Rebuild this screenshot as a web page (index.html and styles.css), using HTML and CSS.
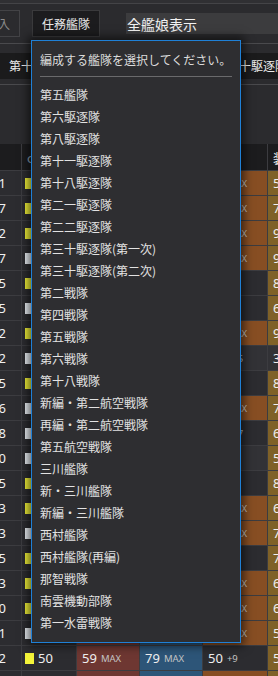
FILE: index.html
```html
<!DOCTYPE html>
<html lang="ja">
<head>
    <meta charset="UTF-8">
    <meta name="viewport" content="width=device-width, initial-scale=1.0">
    <title>艦隊編成</title>
    <link rel="stylesheet" href="styles.css">
</head>
<body>

    <div class="topbar"></div>

    <div class="toolbar">
        <button type="button" class="btn btn-muted">導入</button>
        <button type="button" class="btn btn-dark">任務艦隊</button>
        <input type="text" class="filter" value="全艦娘表示">
    </div>

    <div class="tabs">
        <span class="tab">第十一駆逐隊</span>
        <span class="tab">第十八駆逐隊</span>
        <span class="tab">第三十駆逐隊</span>
    </div>

    <div class="spacer"></div>

    <div class="list">
        <div class="row head">
            <div class="cell"></div>
            <div class="cell cond">cond</div>
            <div class="cell">火力</div>
            <div class="cell">雷装</div>
            <div class="cell">対空</div>
            <div class="cell">装</div>
        </div>

        <div class="row"><div class="cell num">1</div><div class="cell"><i class="sq yellow"></i>49</div><div class="cell red">59<small>MAX</small></div><div class="cell blue">79<small>MAX</small></div><div class="cell orange">49<small>MAX</small></div><div class="cell gold">59</div></div>
        <div class="row"><div class="cell num">7</div><div class="cell"><i class="sq yellow"></i>49</div><div class="cell red">59<small>MAX</small></div><div class="cell blue">79<small>MAX</small></div><div class="cell orange">49<small>MAX</small></div><div class="cell gold">79</div></div>
        <div class="row"><div class="cell num">2</div><div class="cell"><i class="sq yellow"></i>49</div><div class="cell red">59<small>MAX</small></div><div class="cell blue">79<small>MAX</small></div><div class="cell orange">49<small>MAX</small></div><div class="cell gold">99</div></div>
        <div class="row"><div class="cell num">7</div><div class="cell"><i class="sq white"></i>49</div><div class="cell red">59<small>MAX</small></div><div class="cell blue">79<small>MAX</small></div><div class="cell orange">49<small>MAX</small></div><div class="cell gold">99</div></div>
        <div class="row"><div class="cell num">5</div><div class="cell"><i class="sq yellow"></i>49</div><div class="cell red">59<small>MAX</small></div><div class="cell blue">79<small>MAX</small></div><div class="cell">45<small>+4</small></div><div class="cell gold">89</div></div>
        <div class="row"><div class="cell num">5</div><div class="cell"><i class="sq white"></i>49</div><div class="cell red">59<small>MAX</small></div><div class="cell blue">79<small>MAX</small></div><div class="cell">44<small>+3</small></div><div class="cell gold">69</div></div>
        <div class="row"><div class="cell num">2</div><div class="cell"><i class="sq yellow"></i>49</div><div class="cell red">59<small>MAX</small></div><div class="cell blue">79<small>MAX</small></div><div class="cell orange">49<small>MAX</small></div><div class="cell gold">99</div></div>
        <div class="row"><div class="cell num">2</div><div class="cell"><i class="sq white"></i>49</div><div class="cell red">59<small>MAX</small></div><div class="cell blue">79<small>MAX</small></div><div class="cell lift">34<small>+15</small></div><div class="cell lift">39</div></div>
        <div class="row"><div class="cell num">5</div><div class="cell"><i class="sq yellow"></i>49</div><div class="cell red">59<small>MAX</small></div><div class="cell blue">79<small>MAX</small></div><div class="cell">45<small>+4</small></div><div class="cell gold">89</div></div>
        <div class="row"><div class="cell num">6</div><div class="cell"><i class="sq white"></i>49</div><div class="cell red">59<small>MAX</small></div><div class="cell blue">79<small>MAX</small></div><div class="cell orange">49<small>MAX</small></div><div class="cell gold">79</div></div>
        <div class="row"><div class="cell num">8</div><div class="cell"><i class="sq white"></i>49</div><div class="cell red">59<small>MAX</small></div><div class="cell blue">79<small>MAX</small></div><div class="cell">32<small>+17</small></div><div class="cell gold">69</div></div>
        <div class="row"><div class="cell num">0</div><div class="cell"><i class="sq white"></i>49</div><div class="cell red">59<small>MAX</small></div><div class="cell blue">79<small>MAX</small></div><div class="cell lift">44<small>+5</small></div><div class="cell gold">59</div></div>
        <div class="row"><div class="cell num">5</div><div class="cell"><i class="sq yellow"></i>49</div><div class="cell red">59<small>MAX</small></div><div class="cell blue">79<small>MAX</small></div><div class="cell">45<small>+4</small></div><div class="cell gold">89</div></div>
        <div class="row"><div class="cell num">3</div><div class="cell"><i class="sq yellow"></i>49</div><div class="cell red">59<small>MAX</small></div><div class="cell blue">79<small>MAX</small></div><div class="cell orange">49<small>MAX</small></div><div class="cell gold">69</div></div>
        <div class="row"><div class="cell num">3</div><div class="cell"><i class="sq white"></i>49</div><div class="cell red">59<small>MAX</small></div><div class="cell blue">79<small>MAX</small></div><div class="cell orange">49<small>MAX</small></div><div class="cell gold">79</div></div>
        <div class="row"><div class="cell num">5</div><div class="cell"><i class="sq yellow"></i>49</div><div class="cell red">59<small>MAX</small></div><div class="cell blue">79<small>MAX</small></div><div class="cell">45<small>+4</small></div><div class="cell gold">79</div></div>
        <div class="row"><div class="cell num">3</div><div class="cell"><i class="sq yellow"></i>49</div><div class="cell red">59<small>MAX</small></div><div class="cell blue">79<small>MAX</small></div><div class="cell orange">49<small>MAX</small></div><div class="cell gold">69</div></div>
        <div class="row"><div class="cell num">0</div><div class="cell"><i class="sq yellow"></i>49</div><div class="cell red">59<small>MAX</small></div><div class="cell blue">79<small>MAX</small></div><div class="cell orange">49<small>MAX</small></div><div class="cell gold">69</div></div>
        <div class="row"><div class="cell num">1</div><div class="cell"><i class="sq white"></i>49</div><div class="cell red">59<small>MAX</small></div><div class="cell blue">79<small>MAX</small></div><div class="cell orange">49<small>MAX</small></div><div class="cell gold">59</div></div>
        <div class="row"><div class="cell num">2</div><div class="cell"><i class="sq yellow"></i>50</div><div class="cell red">59<small>MAX</small></div><div class="cell blue">79<small>MAX</small></div><div class="cell">50<small>+9</small></div><div class="cell gold">59</div></div>
        <div class="row"><div class="cell num">4</div><div class="cell"><i class="sq white"></i>49</div><div class="cell red">59<small>MAX</small></div><div class="cell blue">79<small>MAX</small></div><div class="cell orange">49<small>MAX</small></div><div class="cell gold">59</div></div>
    </div>

    <div class="dropdown">
        <div class="dd-title">編成する艦隊を選択してください。</div>
        <hr class="dd-rule">
        <div class="opt">第五艦隊</div>
        <div class="opt">第六駆逐隊</div>
        <div class="opt">第八駆逐隊</div>
        <div class="opt">第十一駆逐隊</div>
        <div class="opt">第十八駆逐隊</div>
        <div class="opt">第二一駆逐隊</div>
        <div class="opt">第二二駆逐隊</div>
        <div class="opt">第三十駆逐隊(第一次)</div>
        <div class="opt">第三十駆逐隊(第二次)</div>
        <div class="opt">第二戦隊</div>
        <div class="opt">第四戦隊</div>
        <div class="opt">第五戦隊</div>
        <div class="opt">第六戦隊</div>
        <div class="opt">第十八戦隊</div>
        <div class="opt">新編・第二航空戦隊</div>
        <div class="opt">再編・第二航空戦隊</div>
        <div class="opt">第五航空戦隊</div>
        <div class="opt">三川艦隊</div>
        <div class="opt">新・三川艦隊</div>
        <div class="opt">新編・三川艦隊</div>
        <div class="opt">西村艦隊</div>
        <div class="opt">西村艦隊(再編)</div>
        <div class="opt">那智戦隊</div>
        <div class="opt">南雲機動部隊</div>
        <div class="opt">第一水雷戦隊</div>
    </div>

</body>
</html>
```

FILE: styles.css
```css
body {
    margin: 0;
    width: 278px;
    height: 676px;
    overflow: hidden;
    position: relative;
    background-color: #2b2b2e;
    color: #e6e6e6;
    font-family: "Noto Sans", "Noto Sans CJK JP", sans-serif;
}

.topbar {
    height: 3px;
    background-color: #303033;
    border-bottom: 1px solid #444447;
}

.toolbar {
    display: flex;
    align-items: center;
    gap: 12px;
    height: 39px;
    margin-left: -24px;
    border-bottom: 1px solid #4a4a4d;
}

.btn {
    height: 27px;
    padding: 0 9px;
    font-family: "Noto Sans CJK JP", sans-serif;
    font-size: 12px;
    line-height: 25px;
    white-space: nowrap;
    cursor: pointer;
}

.btn-muted {
    background-color: #2b2b2e;
    border: 1px solid #434346;
    color: #8a8a8a;
}

.btn-dark {
    background-color: #1c1c1e;
    border: 1px solid #3a3a3c;
    color: #e8e8e8;
}

.filter {
    flex: 1;
    min-width: 0;
    height: 21px;
    margin-left: 14px;
    padding: 0 1px;
    border: none;
    background-color: #3c3c3e;
    color: #f2f2f2;
    font-family: "Noto Sans CJK JP", sans-serif;
    font-size: 14px;
}

.tabs {
    display: flex;
    gap: 13px;
    height: 41px;
    padding-top: 9px;
    box-sizing: border-box;
    white-space: nowrap;
    overflow: hidden;
    border-bottom: 1px solid #4a4a4d;
}

.tab {
    flex: none;
    height: 26px;
    padding: 0 9px;
    background-color: #1b1b1c;
    color: #ececec;
    font-family: "Noto Sans CJK JP", sans-serif;
    font-size: 12px;
    line-height: 26px;
}

.spacer {
    height: 59px;
}

.list {
    display: flex;
    flex-direction: column;
    gap: 1px;
    background-color: #3c3c40;
}

.row {
    display: grid;
    grid-template-columns: 21px 54px 62px 62px 64px 1fr;
    column-gap: 1px;
    height: 24px;
}

.row.head {
    height: 26px;
}

.cell {
    display: flex;
    align-items: center;
    padding-left: 5px;
    background-color: #2c2c30;
    color: #f0f0f0;
    font-size: 13px;
    white-space: nowrap;
    overflow: hidden;
}

.head .cell {
    background-color: #1c1c1e;
    color: #f0f0f0;
    font-family: "Noto Sans CJK JP", sans-serif;
}

.head .cond {
    color: #8fa3b6;
}

.cell.num {
    justify-content: flex-end;
    padding: 0 15px 0 0;
}

.cell small {
    margin-left: 4px;
    font-size: 9.5px;
    color: #c4c4c4;
}

.sq {
    display: inline-block;
    width: 9px;
    height: 11px;
    margin: 0 4px 0 -2px;
}

.sq.yellow {
    background-color: #f4f43a;
}

.sq.white {
    background-color: #eef3f8;
}

.red { background-color: #6e3732; }
.blue { background-color: #2d5578; }
.orange { background-color: #874e23; }
.gold { background-color: #7f6128; }
.lift { background-color: #323236; }

.dropdown {
    position: absolute;
    left: 31px;
    top: 40px;
    width: 192px;
    padding: 8px;
    background-color: #2e2e31;
    border: 1px solid #1f80d6;
    box-shadow: 0 0 9px 3px rgba(0, 0, 0, 0.6);
    font-family: "Noto Sans CJK JP", sans-serif;
    font-size: 12px;
    color: #e2e2e2;
}

.dd-title {
    line-height: 22px;
    color: #dcdcdc;
}

.dd-rule {
    margin: 5px 0 7px;
    border: none;
    border-top: 1px solid #6a6a6c;
}

.opt {
    line-height: 22px;
    white-space: nowrap;
}
```
